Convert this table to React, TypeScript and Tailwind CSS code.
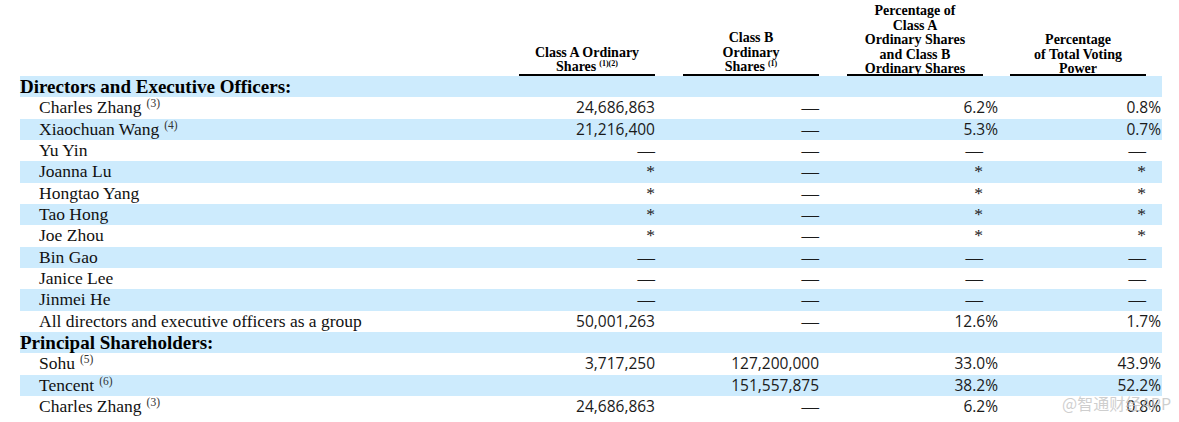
import React from "react";

type Cell =
  | { t: "num"; v: string }
  | { t: "pct"; v: string }
  | { t: "dash" }
  | { t: "star" }
  | { t: "empty" };

const N = (v: string): Cell => ({ t: "num", v });
const P = (v: string): Cell => ({ t: "pct", v });
const D: Cell = { t: "dash" };
const S: Cell = { t: "star" };
const E: Cell = { t: "empty" };

type Row =
  | { kind: "section"; label: string }
  | { kind: "data"; label: string; note?: string; cells: Cell[] };

const rows: Row[] = [
  { kind: "section", label: "Directors and Executive Officers:" },
  { kind: "data", label: "Charles Zhang", note: "(3)", cells: [N("24,686,863"), D, P("6.2"), P("0.8")] },
  { kind: "data", label: "Xiaochuan Wang", note: "(4)", cells: [N("21,216,400"), D, P("5.3"), P("0.7")] },
  { kind: "data", label: "Yu Yin", cells: [D, D, D, D] },
  { kind: "data", label: "Joanna Lu", cells: [S, D, S, S] },
  { kind: "data", label: "Hongtao Yang", cells: [S, D, S, S] },
  { kind: "data", label: "Tao Hong", cells: [S, D, S, S] },
  { kind: "data", label: "Joe Zhou", cells: [S, D, S, S] },
  { kind: "data", label: "Bin Gao", cells: [D, D, D, D] },
  { kind: "data", label: "Janice Lee", cells: [D, D, D, D] },
  { kind: "data", label: "Jinmei He", cells: [D, D, D, D] },
  { kind: "data", label: "All directors and executive officers as a group", cells: [N("50,001,263"), D, P("12.6"), P("1.7")] },
  { kind: "section", label: "Principal Shareholders:" },
  { kind: "data", label: "Sohu", note: "(5)", cells: [N("3,717,250"), N("127,200,000"), P("33.0"), P("43.9")] },
  { kind: "data", label: "Tencent", note: "(6)", cells: [E, N("151,557,875"), P("38.2"), P("52.2")] },
  { kind: "data", label: "Charles Zhang", note: "(3)", cells: [N("24,686,863"), D, P("6.2"), P("0.8")] },
];

const colClass = [
  "w-[136px]",
  "w-[136px] ml-[28px]",
  "w-[136px] ml-[28px]",
  "w-[136px] ml-[27px]",
];

function CellView({ c }: { c: Cell }) {
  if (c.t === "num")
    return (
      <span className="font-['Open_Sans',sans-serif] text-[15.5px] text-[#1a1a1a]">{c.v}</span>
    );
  if (c.t === "pct")
    return (
      <span className="inline-block mr-[-15px] font-['Open_Sans',sans-serif] text-[15.5px] text-[#1a1a1a]">
        {c.v}%
      </span>
    );
  if (c.t === "dash")
    return <span className="font-['Liberation_Serif',serif] text-[17.5px] text-[#1a1a1a]">—</span>;
  if (c.t === "star")
    return <span className="font-['Liberation_Serif',serif] text-[17.5px] text-[#1a1a1a]">*</span>;
  return null;
}

function Header({ lines, sup }: { lines: string[]; sup?: string }) {
  return (
    <div className="flex flex-col justify-end h-full border-b-2 border-black text-center font-['Liberation_Serif',serif] font-bold text-[14px] leading-[14.6px] text-black">
      <div className="relative top-[3px]">
        {lines.map((l, i) => (
          <div key={i}>
            {l}
            {i === lines.length - 1 && sup ? (
              <span className="relative top-[-5px] ml-[3px] text-[8px]">{sup}</span>
            ) : null}
          </div>
        ))}
      </div>
    </div>
  );
}

export default function App() {
  return (
    <div className="relative w-[1179px] h-[422px] overflow-hidden bg-white pl-[20px]">
      <div className="w-[1142px]">
        <div className="flex h-[76px]">
          <div className="w-[499px]" />
          <div className={colClass[0]}>
            <Header lines={["Class A Ordinary", "Shares"]} sup="(1)(2)" />
          </div>
          <div className={colClass[1]}>
            <Header lines={["Class B", "Ordinary", "Shares"]} sup="(1)" />
          </div>
          <div className={colClass[2]}>
            <Header
              lines={["Percentage of", "Class A", "Ordinary Shares", "and Class B", "Ordinary Shares"]}
            />
          </div>
          <div className={colClass[3]}>
            <Header lines={["Percentage", "of Total Voting", "Power"]} />
          </div>
        </div>
        {rows.map((r, i) => {
          const bg = i % 2 === 0 ? "bg-[#cdebfd]" : "";
          if (r.kind === "section")
            return (
              <div
                key={i}
                className={`h-[21.33px] leading-[21.33px] ${bg} font-['Liberation_Serif',serif] font-bold text-[19px] text-black whitespace-nowrap`}
              >
                {r.label}
              </div>
            );
          return (
            <div key={i} className={`flex h-[21.33px] leading-[21.33px] ${bg} whitespace-nowrap`}>
              <div className="w-[499px] pl-[19px] font-['Liberation_Serif',serif] text-[17.5px] text-[#111]">
                {r.label}
                {r.note ? (
                  <span className="relative top-[-6px] ml-[5px] text-[11.5px] text-[#333]">{r.note}</span>
                ) : null}
              </div>
              {r.cells.map((c, j) => (
                <div key={j} className={`${colClass[j]} text-right`}>
                  <CellView c={c} />
                </div>
              ))}
            </div>
          );
        })}
      </div>
      <div className="absolute left-[1062px] top-[393px] font-['Noto_Sans_CJK_SC','Noto_Sans',sans-serif] text-[16px] leading-[20px] text-[rgba(190,190,190,0.75)] whitespace-nowrap">
        @智通财经APP
      </div>
    </div>
  );
}
